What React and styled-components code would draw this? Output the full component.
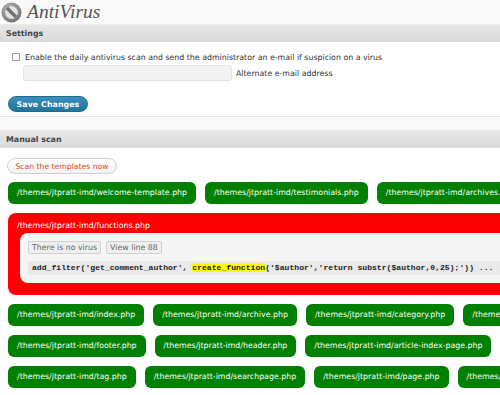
import React from "react"
import styled, { createGlobalStyle } from "styled-components"

const Global = createGlobalStyle`
  html, body {
    margin: 0;
    padding: 0;
    background: #f9f9f9;
    overflow: hidden;
  }
  body {
    font-family: "DejaVu Sans", Verdana, sans-serif;
    font-size: 7.85px;
    color: #333;
  }
`

const Page = styled.div`
  width: 630px;
`

const Head = styled.header`
  display: flex;
  align-items: center;
  gap: 5px;
  height: 24px;
  padding-left: 1px;
  h1 {
    margin: 0;
    font-family: "Liberation Serif", Georgia, serif;
    font-style: italic;
    font-weight: normal;
    font-size: 19.5px;
    color: #555;
    line-height: 20px;
  }
`

const Box = styled.section`
  background: #fff;
  border-bottom: 1px solid #e3e3e3;
  margin-bottom: ${({ gap }) => gap || 0}px;
`

const BoxTitle = styled.h2`
  margin: 0;
  height: 18px;
  line-height: 18px;
  padding-left: 6px;
  font-size: 7.9px;
  font-weight: bold;
  color: #464646;
  background: linear-gradient(#e6e6e6, #dadada);
  border-top: 1px solid #ececec;
  box-sizing: border-box;
`

const Inner = styled.div`
  padding: ${({ pad }) => pad};
`

const CheckRow = styled.label`
  display: flex;
  align-items: center;
  gap: 5px;
  padding-left: 12px;
  height: 12px;
  input {
    margin: 0;
    width: 8px;
    height: 8px;
    appearance: none;
    border: 1px solid #999;
    border-radius: 1px;
    background: #fff;
  }
`

const MailRow = styled.div`
  display: flex;
  align-items: center;
  gap: 4px;
  margin-top: 2px;
  padding-left: 23px;
  input {
    box-sizing: border-box;
    width: 209px;
    height: 16px;
    border: 1px solid #e3e3e3;
    border-radius: 3px;
    background: #f3f3f3;
  }
`

const SaveButton = styled.button`
  margin: 15px 0 0 8px;
  height: 16px;
  width: 80px;
  padding: 0;
  border: 1px solid #1f6b8f;
  border-radius: 8px;
  background: linear-gradient(#3b8fbb, #21759b);
  color: #fff;
  font-family: inherit;
  font-size: 7.8px;
  font-weight: bold;
  letter-spacing: 0.1px;
`

const ScanButton = styled.button`
  height: 16px;
  width: 110px;
  margin-left: 7px;
  padding: 0;
  border: 1px solid #cfcfcf;
  border-radius: 8px;
  background: linear-gradient(#ffffff, #f2f2f2);
  color: #d54e21;
  font-family: inherit;
  font-size: 7.7px;
`

const Files = styled.div`
  display: flex;
  flex-wrap: wrap;
  gap: 9px;
  margin-top: 8px;
  padding-left: 8px;
  width: 615px;
`

const Pill = styled.div`
  height: 22px;
  line-height: 22px;
  padding: 0 9px;
  border-radius: 6px;
  background: #008000;
  color: #fff;
  white-space: nowrap;
`

const Alert = styled.div`
  flex-basis: 100%;
  box-sizing: border-box;
  height: 82px;
  padding: 8px 0 0 9px;
  border-radius: 8px;
  background: #ff0000;
  color: #fff;
`

const Detail = styled.div`
  margin: 3px 0 0 3px;
  height: 50px;
  padding: 8px 8px 0;
  box-sizing: border-box;
  border-radius: 8px 0 0 8px;
  background: #f5f5f5;
`

const Actions = styled.div`
  display: flex;
  gap: 5px;
`

const Small = styled.button`
  height: 13px;
  padding: 0 3px;
  border: 1px solid #d0d0d0;
  border-radius: 2px;
  background: #efefef;
  color: #666;
  font-family: inherit;
  font-size: 7.85px;
  line-height: 11px;
`

const Code = styled.code`
  display: block;
  margin-top: 7px;
  padding: 0 4px;
  height: 14px;
  line-height: 14px;
  background: #e9e9e9;
  color: #222;
  font-family: "Liberation Mono", "Courier New", monospace;
  font-size: 8.1px;
  font-weight: bold;
  white-space: nowrap;
  mark {
    background: #ffff00;
    color: #222;
  }
`

const Logo = () => (
  <svg width="21" height="21" viewBox="0 0 21 21">
    <defs>
      <radialGradient id="lg" cx="40%" cy="35%" r="70%">
        <stop offset="0" stopColor="#bdbdbd" />
        <stop offset="1" stopColor="#6f6f6f" />
      </radialGradient>
    </defs>
    <circle cx="10.5" cy="10.5" r="10" fill="url(#lg)" />
    <circle cx="10.5" cy="10.5" r="6.3" fill="#e4e4e4" />
    <line x1="6" y1="6" x2="15" y2="15" stroke="#707070" strokeWidth="3.4" />
  </svg>
)

const before = ["welcome-template.php", "testimonials.php", "archives.php"]
const after = [
  "index.php", "archive.php", "category.php", "search.php",
  "footer.php", "header.php", "article-index-page.php",
  "tag.php", "searchpage.php", "page.php", "sidebar.php",
]

const base = "/themes/jtpratt-imd/"

export default function App() {
  return (
    <Page>
      <Global />
      <Head>
        <Logo />
        <h1>AntiVirus</h1>
      </Head>

      <Box gap={13}>
        <BoxTitle>Settings</BoxTitle>
        <Inner pad="9px 0 4px">
          <CheckRow>
            <input type="checkbox" />
            Enable the daily antivirus scan and send the administrator an e-mail if suspicion on a virus
          </CheckRow>
          <MailRow>
            <input type="text" />
            Alternate e-mail address
          </MailRow>
          <SaveButton>Save Changes</SaveButton>
        </Inner>
      </Box>

      <Box>
        <BoxTitle>Manual scan</BoxTitle>
        <Inner pad="10px 0 20px">
          <ScanButton>Scan the templates now</ScanButton>
          <Files>
            {before.map(f => <Pill key={f}>{base + f}</Pill>)}
            <Alert>
              {base}functions.php
              <Detail>
                <Actions>
                  <Small>There is no virus</Small>
                  <Small>View line 88</Small>
                </Actions>
                <Code>
                  add_filter('get_comment_author', <mark>create_function</mark>('$author','return substr($author,0,25);')) ...
                </Code>
              </Detail>
            </Alert>
            {after.map(f => <Pill key={f}>{base + f}</Pill>)}
          </Files>
        </Inner>
      </Box>
    </Page>
  )
}
